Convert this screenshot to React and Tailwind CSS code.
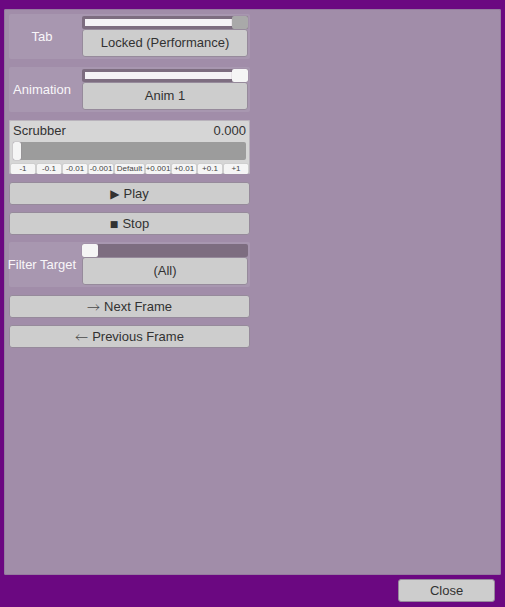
import { useState } from 'react';

const OUTLINE = 'rounded-[3px] border border-[#968a9b]';
const THUMB =
  '[&::-webkit-slider-thumb]:appearance-none [&::-webkit-slider-thumb]:rounded-[2px] [&::-webkit-slider-thumb]:shadow-[0_0_1px_#6f6274]';

function BarButton({ children }) {
  return (
    <button
      type="button"
      className={`flex h-[23px] w-full items-center justify-center gap-1 bg-[#cdcdcd] text-[#323232] ${OUTLINE}`}
    >
      {children}
    </button>
  );
}

function Shape({ children, size }) {
  return (
    <span aria-hidden="true" className={`text-left font-['DejaVu_Sans',sans-serif] ${size}`}>
      {children}
    </span>
  );
}

function Arrow({ children }) {
  return (
    <span aria-hidden="true" className="font-['Noto_Sans_CJK_JP',sans-serif] font-light text-[#4a4a4a]">
      {children}
    </span>
  );
}

function Chooser({ id, label, choice, initial, thumbColor }) {
  const [value, setValue] = useState(initial);
  return (
    <div className="flex h-[45px] gap-[7px] rounded-[2px] bg-[#a897b0] pr-[2px]">
      <label
        htmlFor={id}
        className="flex w-[66px] shrink-0 items-center justify-center whitespace-nowrap text-[#f8f6f9]"
      >
        {label}
      </label>
      <div className="flex flex-1 flex-col pt-[2px] pb-[2px]">
        <input
          id={id}
          type="range"
          min="0"
          max="100"
          value={value}
          onChange={(e) => setValue(Number(e.target.value))}
          className={`block h-[13px] w-full appearance-none rounded-[2px] bg-[#7d6d80] bg-[linear-gradient(#f5f3f6,#f5f3f6)] bg-[position:3px_3px] bg-no-repeat [&::-webkit-slider-thumb]:h-[13px] [&::-webkit-slider-thumb]:w-4 ${THUMB} ${thumbColor}`}
          style={{ backgroundSize: `calc(${value}% - 6px) 7px` }}
        />
        <button
          type="button"
          className={`flex flex-1 items-center justify-center bg-[#cdcdcd] text-[#323232] ${OUTLINE}`}
        >
          {choice}
        </button>
      </div>
    </div>
  );
}

const STEPS = ['-1', '-0.1', '-0.01', '-0.001', 'Default', '+0.001', '+0.01', '+0.1', '+1'];

function Scrubber() {
  const [time, setTime] = useState(0);
  const step = (s) => setTime(s === 'Default' ? 0 : Math.min(10, Math.max(0, time + Number(s))));
  return (
    <div className="flex h-[54px] flex-col rounded-[2px] bg-[#d6d6d6] shadow-[inset_0_0_0_1px_#b9b3bc]">
      <div className="flex h-[22px] items-center justify-between px-1 text-[#323232]">
        <label htmlFor="scrubber">Scrubber</label>
        <output htmlFor="scrubber">{time.toFixed(3)}</output>
      </div>
      <div className="px-1">
        <input
          id="scrubber"
          type="range"
          min="0"
          max="10"
          step="0.001"
          value={time}
          onChange={(e) => setTime(Number(e.target.value))}
          className={`block h-[18px] w-full appearance-none rounded-[2px] bg-[#9c9c9c] [&::-webkit-slider-thumb]:h-[18px] [&::-webkit-slider-thumb]:w-2 [&::-webkit-slider-thumb]:bg-[#f5f5f5] ${THUMB}`}
        />
      </div>
      <div className="mt-auto flex gap-[2px] px-[2px] text-[8px] leading-[10px]">
        {STEPS.map((s) => (
          <button
            key={s}
            type="button"
            onClick={() => step(s)}
            className={`flex h-[10px] items-center justify-center whitespace-nowrap rounded-[1px] bg-[#f5f5f5] text-[#444444] shadow-[0_0_1px_#8a8a8a] ${s === 'Default' ? 'w-[29px] shrink-0' : 'min-w-0 flex-1'}`}
          >
            {s}
          </button>
        ))}
      </div>
    </div>
  );
}

export default function App() {
  return (
    <div className="flex min-h-screen flex-col bg-[#6b0881] px-1 pt-[9px] font-['Liberation_Sans','DejaVu_Sans',sans-serif] text-[13px] leading-4">
      <main className="flex-1 rounded-[2px] bg-[#a18da9] px-[5px] py-[5px] shadow-[inset_0_0_0_1px_#957b9f]">
        <div className="flex w-[241px] flex-col gap-2">
          <Chooser
            id="tab"
            label="Tab"
            choice="Locked (Performance)"
            initial={100}
            thumbColor="[&::-webkit-slider-thumb]:bg-[#a9a9a9]"
          />
          <Chooser
            id="animation"
            label="Animation"
            choice="Anim 1"
            initial={100}
            thumbColor="[&::-webkit-slider-thumb]:bg-[#f5f5f5]"
          />
          <Scrubber />
          <div className="flex flex-col gap-[7px]">
            <BarButton>
              <Shape size="text-[12px]">▶</Shape>
              Play
            </BarButton>
            <BarButton>
              <Shape size="text-[9px]">■</Shape>
              Stop
            </BarButton>
            <Chooser
              id="filter"
              label="Filter Target"
              choice="(All)"
              initial={0}
              thumbColor="[&::-webkit-slider-thumb]:bg-[#f5f5f5]"
            />
          </div>
          <div className="flex flex-col gap-[7px]">
            <BarButton>
              <Arrow>→</Arrow>
              Next Frame
            </BarButton>
            <BarButton>
              <Arrow>←</Arrow>
              Previous Frame
            </BarButton>
          </div>
        </div>
      </main>
      <footer className="flex h-8 items-start justify-end pt-1 pr-[6px]">
        <div className="w-[97px]">
          <BarButton>Close</BarButton>
        </div>
      </footer>
    </div>
  );
}
